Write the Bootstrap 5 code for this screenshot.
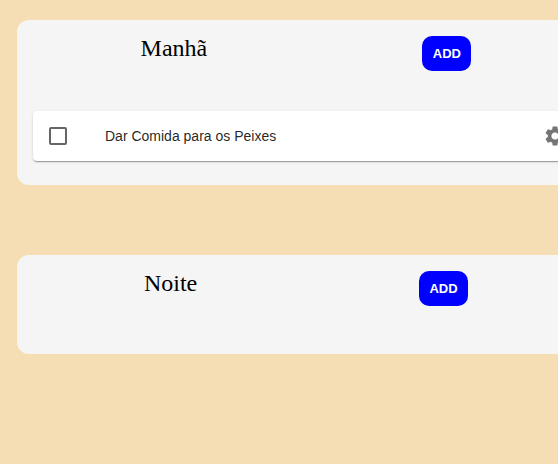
<!DOCTYPE html>
<html lang="pt">
<head>
<meta charset="utf-8">
<meta name="viewport" content="width=device-width, initial-scale=1">
<title>Tarefas</title>
<link href="https://cdn.jsdelivr.net/npm/bootstrap@5.3.0/dist/css/bootstrap.min.css" rel="stylesheet">
<style>
body { background: wheat; overflow-x: hidden; }
.board { gap: 70px; padding: 20px 17px; }
/* panels keep a readable minimum and run past narrow windows */
.panel { min-width: 578px; padding: 16px; background: #f5f5f5; border-radius: 12px; }
.panel-head { min-height: 67px; }
.panel-title { font: 400 24px/24px "Liberation Serif", serif; color: #000; }
.add-btn { min-width: 49px; padding: 10px; border: 0; border-radius: 10px; background: #00f; color: #fff; font: 700 13px/15px "Liberation Sans", sans-serif; }
.add-btn:hover { background: #00c; color: #fff; }
.task { min-height: 50px; padding: 0 12px 0 16px; border-radius: 4px; background: #fff; box-shadow: 0 2px 1px -1px rgba(0,0,0,.2), 0 1px 1px rgba(0,0,0,.14), 0 1px 3px rgba(0,0,0,.12); }
.task-check.form-check-input { width: 18px; height: 18px; border: 2px solid #666; border-radius: 2px; }
.task-label { margin-left: 38px; font: 400 14px/20px "Liberation Sans", sans-serif; color: rgba(0,0,0,.87); }
.gear-btn { color: #757575; line-height: 0; }
</style>
<script src="https://cdn.jsdelivr.net/npm/bootstrap@5.3.0/dist/js/bootstrap.bundle.min.js" defer></script>
</head>
<body>
<main class="board d-flex flex-column">
  <section class="panel">
    <header class="panel-head d-flex justify-content-around align-items-start">
      <h2 class="panel-title m-0">Manhã</h2>
      <button type="button" class="btn add-btn">ADD</button>
    </header>
    <div class="task d-flex align-items-center my-2">
      <input type="checkbox" class="form-check-input task-check m-0" id="peixes">
      <label class="task-label flex-grow-1" for="peixes">Dar Comida para os Peixes</label>
      <button type="button" class="btn gear-btn border-0 p-0" aria-label="Configurar">
        <svg width="24" height="24" viewBox="0 0 24 24" fill="currentColor" aria-hidden="true"><path d="M19.14 12.94c.04-.3.06-.61.06-.94 0-.32-.02-.64-.07-.94l2.03-1.58c.18-.14.23-.41.12-.61l-1.92-3.32c-.12-.22-.37-.29-.59-.22l-2.39.96c-.5-.38-1.03-.7-1.62-.94l-.36-2.54c-.04-.24-.24-.41-.48-.41h-3.84c-.24 0-.43.17-.47.41l-.36 2.54c-.59.24-1.13.57-1.62.94l-2.39-.96c-.22-.08-.47 0-.59.22L2.74 8.87c-.12.21-.08.47.12.61l2.03 1.58c-.05.3-.09.63-.09.94s.02.64.07.94l-2.03 1.58c-.18.14-.23.41-.12.61l1.92 3.32c.12.22.37.29.59.22l2.39-.96c.5.38 1.03.7 1.62.94l.36 2.54c.05.24.24.41.48.41h3.84c.24 0 .44-.17.47-.41l.36-2.54c.59-.24 1.13-.56 1.62-.94l2.39.96c.22.08.47 0 .59-.22l1.92-3.32c.12-.22.07-.47-.12-.61l-2.01-1.58zM12 15.6c-1.98 0-3.6-1.62-3.6-3.6s1.62-3.6 3.6-3.6 3.6 1.62 3.6 3.6-1.62 3.6-3.6 3.6z"/></svg>
      </button>
    </div>
  </section>
  <section class="panel">
    <header class="panel-head d-flex justify-content-around align-items-start">
      <h2 class="panel-title m-0">Noite</h2>
      <button type="button" class="btn add-btn">ADD</button>
    </header>
  </section>
</main>
</body>
</html>
